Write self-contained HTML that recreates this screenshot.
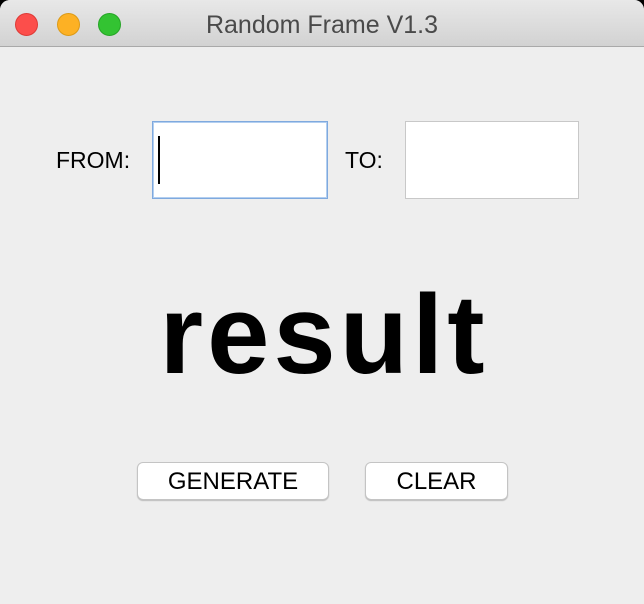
<!DOCTYPE html>
<html><head><style>
html,body{margin:0;padding:0;width:644px;height:604px;background:#000;overflow:hidden;font-family:"Liberation Sans",sans-serif}
.win{position:absolute;left:0;top:0;width:644px;height:604px;background:#eeeeee;border-radius:10px 10px 0 0;overflow:hidden}
.tb{position:absolute;left:0;top:0;width:644px;height:46px;background:linear-gradient(#e8e8e8,#d2d2d2);border-bottom:1px solid #a9a9a9}
.dot{position:absolute;top:13px;width:23px;height:23px;border-radius:50%}
.title{position:absolute;top:11px;left:0;width:644px;text-align:center;font-size:25px;color:#4a4a4a}
.lbl{position:absolute;font-size:23px;color:#000}
.inp{position:absolute;background:#fff;box-sizing:border-box}
.btn{position:absolute;top:462px;height:38px;background:#fff;border:1px solid #c4c4c4;border-radius:6px;box-sizing:border-box;font-size:24px;text-align:center;line-height:37px;box-shadow:0 1px 1px #bbb}
.res{position:absolute;left:0;width:644px;top:270px;text-align:center;font-size:112px;font-weight:bold;letter-spacing:4px;line-height:130px;text-indent:4px}
</style></head><body>
<div class="win">
<div class="tb">
<div class="dot" style="left:15px;background:#fc4e4b;border:1px solid #dd3a36;box-sizing:border-box"></div>
<div class="dot" style="left:57px;background:#fdb124;border:1px solid #dc9a16;box-sizing:border-box"></div>
<div class="dot" style="left:98px;background:#33c332;border:1px solid #26a526;box-sizing:border-box"></div>
<div class="title">Random Frame V1.3</div>
</div>
<div class="lbl" style="left:56px;top:147px">FROM:</div>
<div class="inp" style="left:152px;top:121px;width:176px;height:78px;border:1px solid #7fa9de;box-shadow:0 0 0 1px #b3cff0 inset"><div style="position:absolute;left:5px;top:14px;width:2px;height:48px;background:#000"></div></div>
<div class="lbl" style="left:345px;top:147px">TO:</div>
<div class="inp" style="left:405px;top:121px;width:174px;height:78px;border:1px solid #c8c8c8"></div>
<div class="res">result</div>
<div class="btn" style="left:137px;width:192px">GENERATE</div>
<div class="btn" style="left:365px;width:143px">CLEAR</div>
</div>
</body></html>
